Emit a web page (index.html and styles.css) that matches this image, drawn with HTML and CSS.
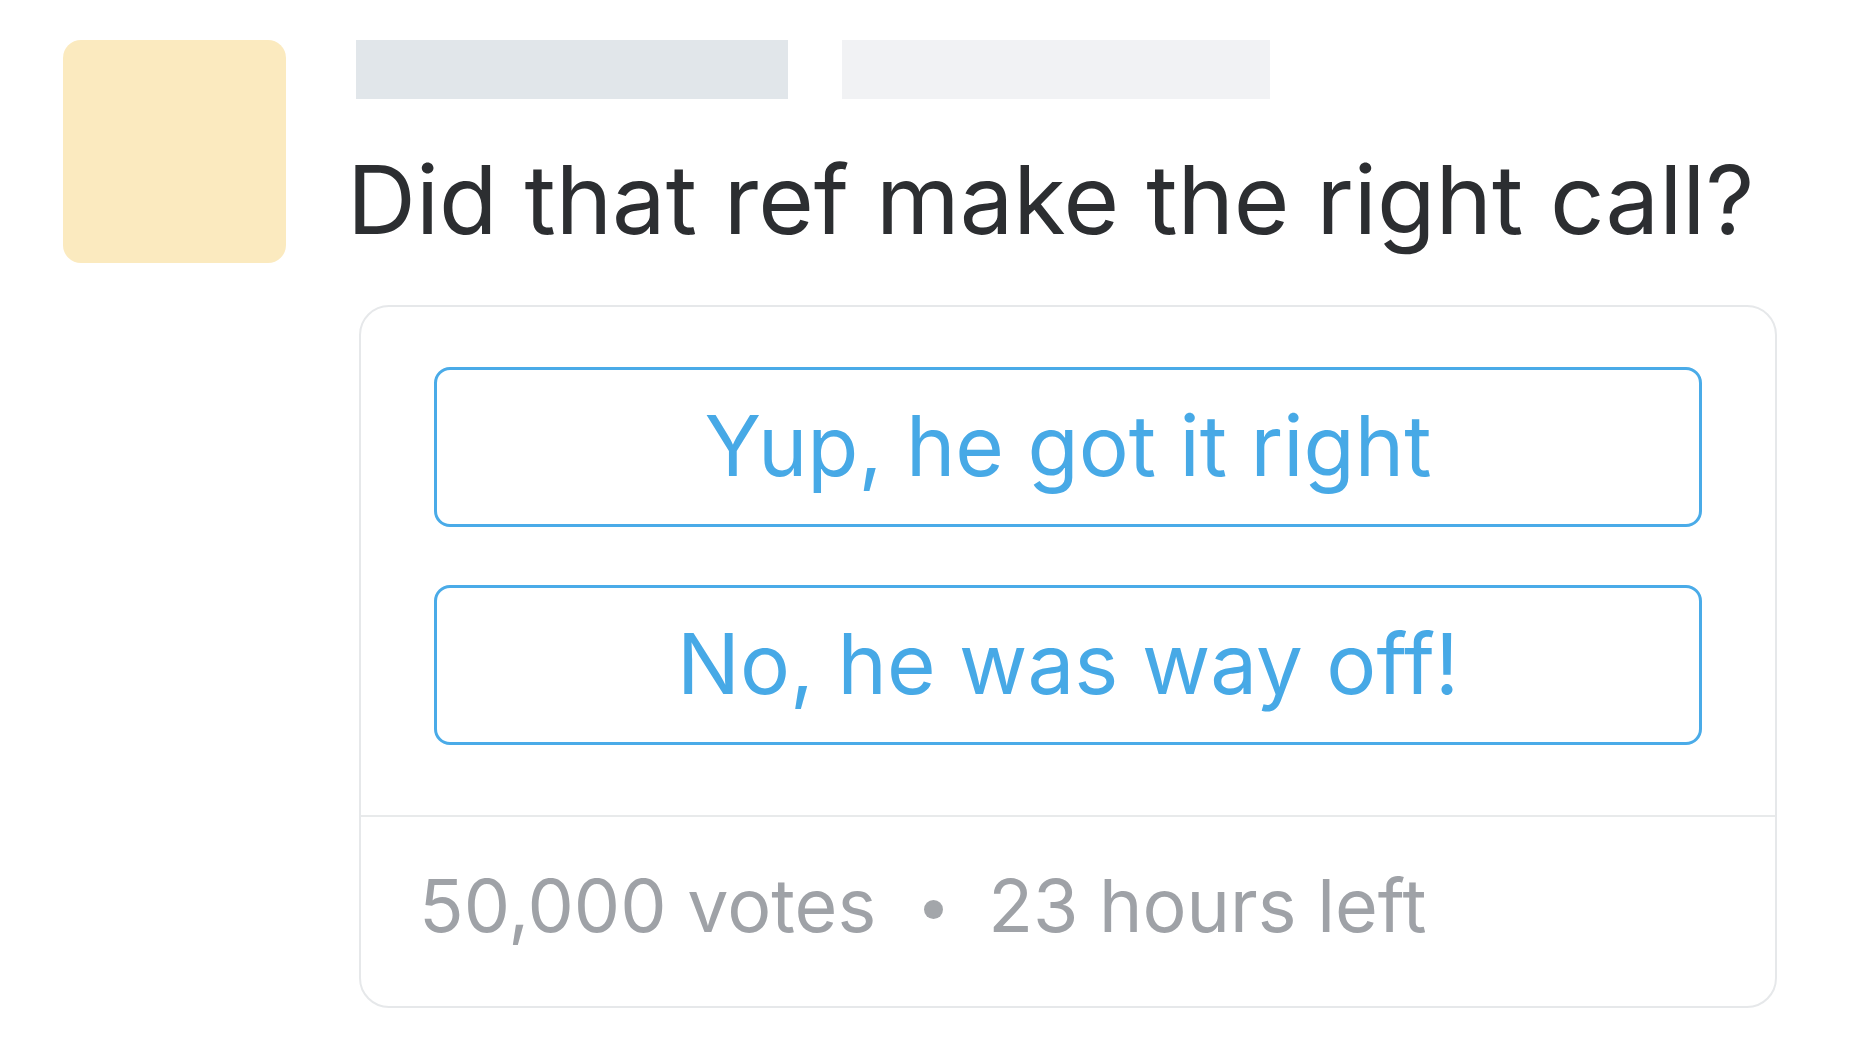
FILE: index.html
```html
<!DOCTYPE html>
<html lang="en">
<head>
<meta charset="utf-8">
<title>Poll</title>
<link rel="stylesheet" href="styles.css">
</head>
<body>
<div class="tweet">
  <div class="avatar"></div>
  <div class="content">
    <div class="header">
      <div class="bar bar-name"></div>
      <div class="bar bar-handle"></div>
    </div>
    <p class="question">Did that ref make the right call?</p>
    <div class="poll">
      <div class="options">
        <button class="option">Yup, he got it right</button>
        <button class="option">No, he was way off!</button>
      </div>
      <div class="poll-footer">
        <span class="votes">50,000 votes</span>
        <span class="dot"></span>
        <span class="time">23 hours left</span>
      </div>
    </div>
  </div>
</div>
</body>
</html>
```

FILE: styles.css
```css
html, body {
  margin: 0;
  padding: 0;
  background: #ffffff;
}

body {
  font-family: Inter, "Liberation Sans", Arial, sans-serif;
}

.tweet {
  display: flex;
  align-items: flex-start;
  gap: 70px;
  padding: 40px 0 0 63px;
}

.avatar {
  flex: 0 0 auto;
  width: 223px;
  height: 223px;
  border-radius: 18px;
  background: #fbeabf;
}

.content {
  display: flex;
  flex-direction: column;
  width: 1421px;
}

.header {
  display: flex;
  gap: 54px;
}

.bar {
  height: 59px;
}

.bar-name {
  width: 432px;
  background: #e1e6ea;
}

.bar-handle {
  width: 428px;
  background: #f1f2f4;
}

.question {
  margin: 43px 0 0 -9px;
  font-size: 95.5px;
  line-height: 114px;
  font-weight: 400;
  color: #2c2e31;
  white-space: nowrap;
}

.poll {
  margin: 49px 0 0 3px;
  border: 2px solid #e6e8ea;
  border-radius: 30px;
  overflow: hidden;
}

.options {
  display: flex;
  flex-direction: column;
  gap: 58px;
  padding: 60px 73px 70px 73px;
}

.option {
  height: 160px;
  border: 3px solid #4aabe8;
  border-radius: 16px;
  background: #ffffff;
  color: #47a9e6;
  font-family: Inter, "Liberation Sans", Arial, sans-serif;
  font-size: 83.5px;
  font-weight: 400;
  padding: 0 0 3px 0;
  cursor: pointer;
}

.poll-footer {
  display: flex;
  align-items: center;
  height: 191px;
  border-top: 2px solid #e8eaeb;
  padding: 0 0 12px 58px;
  box-sizing: border-box;
  color: #9fa2a7;
  font-size: 73.5px;
}

.dot {
  width: 19px;
  height: 19px;
  border-radius: 50%;
  background: #a3a6aa;
  margin: 8px 45px 0 48px;
}
```
